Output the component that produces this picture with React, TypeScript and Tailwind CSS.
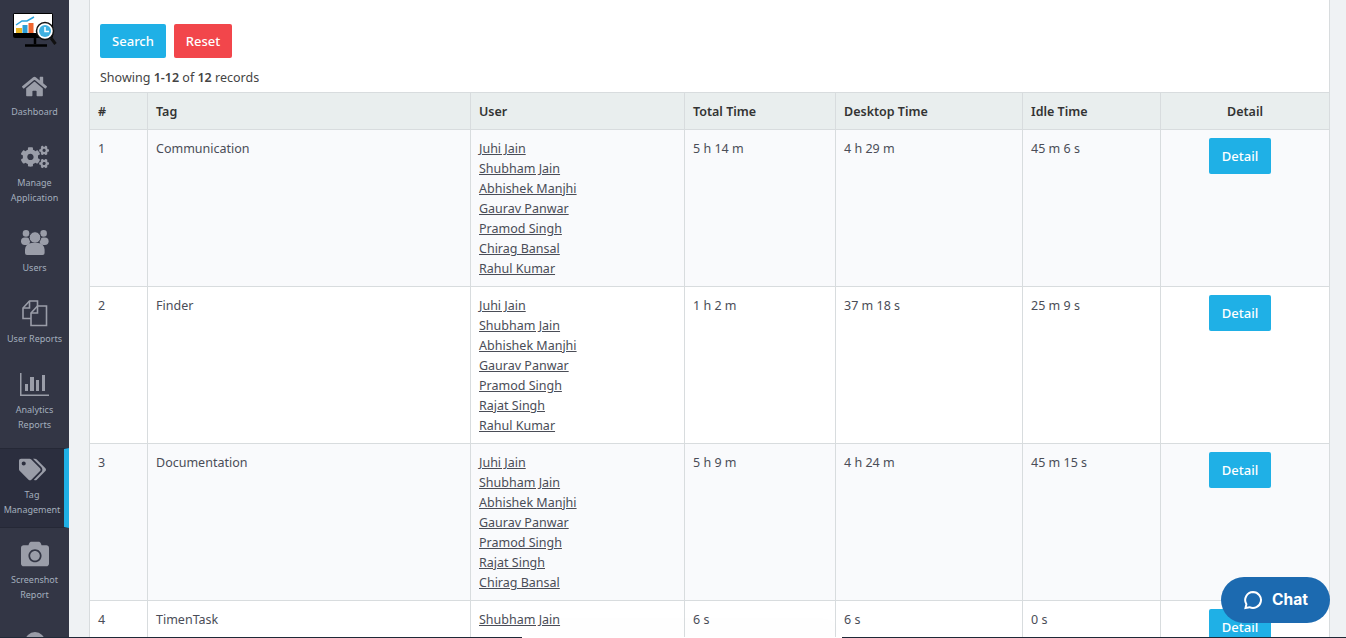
import { FaHome, FaCogs, FaTags, FaCamera } from 'react-icons/fa';
import type { ReactNode } from 'react';

const rows = [
  { id: 1, tag: 'Communication', users: ['Juhi Jain', 'Shubham Jain', 'Abhishek Manjhi', 'Gaurav Panwar', 'Pramod Singh', 'Chirag Bansal', 'Rahul Kumar'], total: '5 h 14 m', desktop: '4 h 29 m', idle: '45 m 6 s' },
  { id: 2, tag: 'Finder', users: ['Juhi Jain', 'Shubham Jain', 'Abhishek Manjhi', 'Gaurav Panwar', 'Pramod Singh', 'Rajat Singh', 'Rahul Kumar'], total: '1 h 2 m', desktop: '37 m 18 s', idle: '25 m 9 s' },
  { id: 3, tag: 'Documentation', users: ['Juhi Jain', 'Shubham Jain', 'Abhishek Manjhi', 'Gaurav Panwar', 'Pramod Singh', 'Rajat Singh', 'Chirag Bansal'], total: '5 h 9 m', desktop: '4 h 24 m', idle: '45 m 15 s' },
  { id: 4, tag: 'TimenTask', users: ['Shubham Jain'], total: '6 s', desktop: '6 s', idle: '0 s' },
];

function Logo() {
  return (
    <svg width="46" height="36" viewBox="0 0 46 36">
      <rect x="1" y="2" width="40" height="25" rx="2" fill="#000" />
      <rect x="2" y="3" width="38" height="19" fill="#fff" />
      <rect x="4" y="17" width="6" height="5" fill="#e9b521" />
      <rect x="10.5" y="14" width="5" height="8" fill="#2b9fd8" />
      <rect x="16.5" y="12" width="5" height="10" fill="#f0652f" />
      <path d="M4 14 L10 10 L15 10 L22 6" stroke="#29a3dc" strokeWidth="1.5" fill="none" />
      <path d="M23 27 V33 M13 34.5 H35" stroke="#000" strokeWidth="2.5" />
      <circle cx="33" cy="20" r="8.5" fill="#fff" stroke="#111" strokeWidth="1.5" />
      <circle cx="33" cy="20" r="6" fill="#3fb0e0" />
      <path d="M33 16 V20.5 H37" stroke="#fff" strokeWidth="1.5" fill="none" />
      <path d="M39 27 L43.5 33" stroke="#111" strokeWidth="3" />
    </svg>
  );
}

function PeopleIcon() {
  return (
    <svg width="28" height="25" viewBox="0 0 28 25" fill="currentColor">
      <circle cx="5" cy="3.4" r="3.3" />
      <circle cx="22.6" cy="3.4" r="3.3" />
      <rect x="0" y="7.5" width="9" height="7.5" rx="3.7" />
      <rect x="18.6" y="7.5" width="9" height="7.5" rx="3.7" />
      <circle cx="14" cy="7.5" r="5.8" stroke="#333645" strokeWidth="1" />
      <path d="M4 23 V19.5 a6.5 6.5 0 0 1 6.5 -6.5 h6.6 a6.5 6.5 0 0 1 6.5 6.5 V23 a2 2 0 0 1 -2 2 h-15.6 a2 2 0 0 1 -2 -2 Z" />
    </svg>
  );
}

function DocsIcon() {
  return (
    <svg width="26" height="27" viewBox="0 0 26 27" fill="none" stroke="currentColor" strokeWidth="1.6">
      <path d="M15.5 6 V1 H7.5 L1 8 V18.5 H9" />
      <path d="M7.5 1 V8 H1" />
      <path d="M9 13 L15.5 6 H24.5 V25.5 H9 Z" />
      <path d="M15.5 6 V13 H9" />
    </svg>
  );
}

function BarsIcon() {
  return (
    <svg width="29" height="23" viewBox="0 0 29 23" fill="currentColor">
      <path d="M0.75 0 V22.25 H29" fill="none" stroke="currentColor" strokeWidth="1.5" />
      <rect x="5" y="11" width="3" height="7" />
      <rect x="10" y="4" width="4" height="14" />
      <rect x="16" y="7" width="3" height="11" />
      <rect x="22" y="2" width="3" height="16" />
    </svg>
  );
}

function NavItem({ icon, lines, height, active, pad = 'pt-[11px]' }: { icon: ReactNode; lines: string[]; height: string; active?: boolean; pad?: string }) {
  return (
    <div className={`${height} ${pad} shrink-0 flex flex-col items-center text-[#9a9da8] ${active ? 'bg-[#2b2e3e] border-y border-[#252836] border-r-[5px] border-r-[#1fb0e6]' : ''}`}>
      <div className="h-[28px] shrink-0 flex items-center justify-center">{icon}</div>
      <div className="mt-[5px] text-center text-[9px] leading-[14.5px] text-[#a3aebd] whitespace-nowrap">
        {lines.map((l) => (
          <div key={l}>{l}</div>
        ))}
      </div>
    </div>
  );
}

function Sidebar() {
  return (
    <aside className="w-[69px] shrink-0 bg-[#333645] flex flex-col overflow-hidden">
      <div className="h-[61px] shrink-0 flex items-start justify-center pl-[1px] pt-[11px]">
        <Logo />
      </div>
      <NavItem height="h-[71px]" lines={['Dashboard']} icon={<FaHome className="w-[25px] h-[25px]" />} />
      <NavItem height="h-[85px]" lines={['Manage', 'Application']} icon={<FaCogs className="w-[28px] h-[28px]" />} />
      <NavItem height="h-[71px]" lines={['Users']} icon={<PeopleIcon />} />
      <NavItem height="h-[71px]" lines={['User Reports']} icon={<DocsIcon />} />
      <NavItem height="h-[89px]" lines={['Analytics', 'Reports']} icon={<BarsIcon />} />
      <NavItem height="h-[80px]" active pad="pt-[6px]" lines={['Tag', 'Management']} icon={<FaTags className="w-[27px] h-[27px]" />} />
      <NavItem height="h-[90px]" pad="pt-[12px]" lines={['Screenshot', 'Report']} icon={<FaCamera className="w-[28px] h-[28px]" />} />
      <div className="flex justify-center pt-[14px] shrink-0">
        <div className="w-[20px] h-[20px] rounded-full bg-[#9a9da8]" />
      </div>
    </aside>
  );
}

const th = 'border border-[#d8dcde] px-2 pt-[2px] h-[37px] font-semibold text-[#333]';
const td = 'border border-[#d8dcde] px-2 pt-[9px] pb-[7px] align-top';

export default function App() {
  return (
    <div className="relative h-[638px] overflow-hidden flex bg-[#eff2f4] font-['Noto_Sans',sans-serif] text-[12.5px] leading-5 text-[#4a4d57]">
      <Sidebar />
      <main className="ml-[20px] w-[1241px] h-[638px] shrink-0 bg-white overflow-hidden">
        <div className="border-x border-[#d8dcde] h-[92px]">
          <div className="pt-[24px] pl-[10px] flex gap-2">
            <button className="h-[34px] w-[66px] rounded-[2px] bg-[#1fb0e6] text-white text-[13px] font-medium">Search</button>
            <button className="h-[34px] w-[58px] rounded-[2px] bg-[#f2464b] text-white text-[13px] font-medium">Reset</button>
          </div>
          <p className="pl-[10px] mt-[10px] h-[24px] text-[#444]">
            Showing <b className="font-semibold">1-12</b> of <b className="font-semibold">12</b> records
          </p>
        </div>
        <table className="table-fixed border-collapse w-[1240px]">
          <colgroup>
            <col className="w-[58px]" />
            <col className="w-[323px]" />
            <col className="w-[214px]" />
            <col className="w-[151px]" />
            <col className="w-[187px]" />
            <col className="w-[138px]" />
            <col className="w-[169px]" />
          </colgroup>
          <thead className="bg-[#e9eeee]">
            <tr>
              <th className={`${th} text-left`}>#</th>
              <th className={`${th} text-left`}>Tag</th>
              <th className={`${th} text-left`}>User</th>
              <th className={`${th} text-left`}>Total Time</th>
              <th className={`${th} text-left`}>Desktop Time</th>
              <th className={`${th} text-left`}>Idle Time</th>
              <th className={`${th} text-center`}>Detail</th>
            </tr>
          </thead>
          <tbody>
            {rows.map((r) => (
              <tr key={r.id} className={r.id % 2 ? 'bg-[#f9fafc]' : 'bg-white'}>
                <td className={td}>{r.id}</td>
                <td className={td}>{r.tag}</td>
                <td className={td}>
                  {r.users.map((u) => (
                    <div key={u}>
                      <a className="underline">{u}</a>
                    </div>
                  ))}
                </td>
                <td className={td}>{r.total}</td>
                <td className={td}>{r.desktop}</td>
                <td className={td}>{r.idle}</td>
                <td className={td}>
                  <button className="block h-[36px] w-[62px] ml-[40px] -mt-px rounded-[2px] bg-[#1fb0e6] text-white text-[13px] font-medium">Detail</button>
                </td>
              </tr>
            ))}
          </tbody>
        </table>
      </main>
      <div className="absolute right-[16px] top-[577px] w-[109px] h-[46px] rounded-full bg-[#1c6ab0] text-white flex items-center justify-center gap-[9px] font-['Inter',sans-serif] text-[15.5px] font-bold">
        <svg width="20" height="20" viewBox="0 0 20 20" fill="none" stroke="currentColor" strokeWidth="2">
          <path d="M10 2 a8 8 0 1 1 -3.5 15.2 L2.5 18 L3.4 14.2 A8 8 0 0 1 10 2 Z" />
        </svg>
        Chat
      </div>
      <div className="absolute left-0 right-0 bottom-0 h-px bg-[#1f2937]" />
      <div className="absolute left-[522px] w-[320px] bottom-0 h-px bg-white shadow-[0_-8px_24px_rgba(0,0,0,0.15)]" />
    </div>
  );
}
